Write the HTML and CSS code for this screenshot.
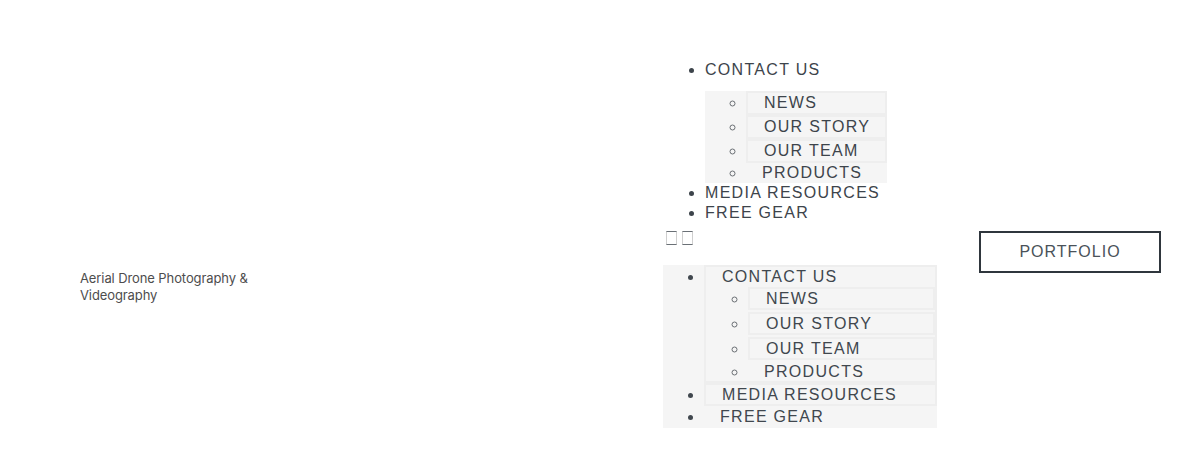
FILE: index.html
```html
<!DOCTYPE html>
<html lang="en">
<head>
<meta charset="utf-8">
<title>Aerial Drone Photography &amp; Videography</title>
<link rel="stylesheet" href="styles.css">
</head>
<body>
<header class="header">
  <div class="brand">Aerial Drone Photography &amp;<br>Videography</div>
  <nav class="nav">
    <ul class="menu">
      <li>CONTACT US
        <ul class="submenu">
          <li class="boxed">NEWS</li>
          <li class="boxed">OUR STORY</li>
          <li class="boxed">OUR TEAM</li>
          <li>PRODUCTS</li>
        </ul>
      </li>
      <li>MEDIA RESOURCES</li>
      <li>FREE GEAR</li>
    </ul>
    <div class="tofu"><span></span><span></span></div>
    <ul class="menu2">
      <li class="boxed">CONTACT US
        <ul class="submenu2">
          <li class="boxed">NEWS</li>
          <li class="boxed">OUR STORY</li>
          <li class="boxed">OUR TEAM</li>
          <li>PRODUCTS</li>
        </ul>
      </li>
      <li class="boxed">MEDIA RESOURCES</li>
      <li class="last">FREE GEAR</li>
    </ul>
  </nav>
  <a class="cta" href="#">PORTFOLIO</a>
</header>
</body>
</html>
```
FILE: styles.css
```css
html, body {
  margin: 0;
  padding: 0;
  background: #ffffff;
}

.header {
  display: flex;
  align-items: flex-start;
  height: 470px;
  box-sizing: border-box;
  padding: 60px 0 0 80px;
  font-family: "Liberation Sans", Arial, sans-serif;
}

.brand {
  width: 583px;
  flex: none;
  margin-top: 210px;
  font-family: "Inter", sans-serif;
  font-size: 13px;
  line-height: 17px;
  letter-spacing: -0.1px;
  color: #4d4d4d;
}

.nav {
  width: 274px;
  flex: none;
  font-size: 16px;
  letter-spacing: 1.3px;
  color: #3d444b;
}

.nav ul {
  margin: 0;
  list-style: disc;
}

.menu {
  padding: 0 0 0 42px;
  width: 182px;
  line-height: 20px;
}

.submenu {
  margin-top: 11px !important;
  padding: 0 0 0 41px;
  background: #f5f5f5;
  list-style-type: circle !important;
}

.submenu li,
.submenu2 li {
  padding-left: 16px;
}

.submenu li.boxed {
  border: 2px solid #eeeeee;
  line-height: 20px;
}

.submenu li::marker,
.submenu2 li::marker {
  color: #6a6f74;
}

.tofu {
  display: flex;
  gap: 5px;
  margin: 8px 0 0 3px;
  height: 14px;
}

.tofu span {
  width: 9px;
  height: 12px;
  border: 1px solid #cfcfcf;
  border-top-color: #6a7076;
  border-bottom-color: #6a7076;
}

.menu2 {
  margin-top: 20px !important;
  padding: 0 0 0 41px;
  background: #f5f5f5;
  line-height: 19px;
  color: #40474e;
}

.menu2 > li {
  padding-left: 16px;
}

.menu2 > li.last {
  padding-top: 1px;
  padding-bottom: 2px;
}

.menu2 li.boxed {
  border: 2px solid #eeeeee;
}

.submenu2 {
  padding: 0 0 0 26px;
  margin-top: 1px !important;
  list-style-type: circle !important;
}

.submenu2 li.boxed {
  margin-bottom: 2px;
}

.cta {
  flex: none;
  margin: 171px 0 0 42px;
  width: 182px;
  height: 42px;
  box-sizing: border-box;
  border: 2px solid #2f363d;
  display: flex;
  align-items: center;
  justify-content: center;
  font-size: 16px;
  letter-spacing: 1px;
  color: #4a5259;
  text-decoration: none;
}
```
